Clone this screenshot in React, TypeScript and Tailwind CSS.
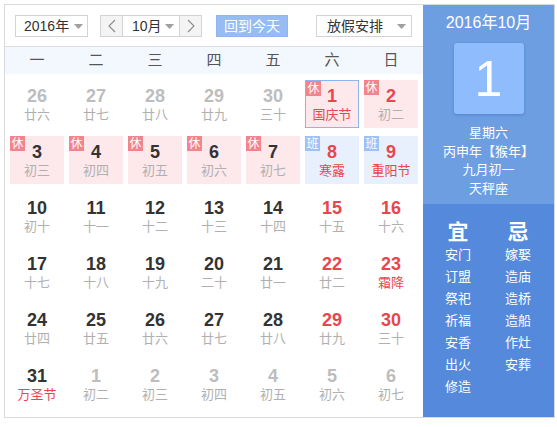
import React from "react";

type Day = {
  d: number;
  sub: string;
  other?: boolean;
  red?: boolean;
  fest?: boolean;
  tag?: "休" | "班";
  selected?: boolean;
};

const days: Day[] = [
  { d: 26, sub: "廿六", other: true },
  { d: 27, sub: "廿七", other: true },
  { d: 28, sub: "廿八", other: true },
  { d: 29, sub: "廿九", other: true },
  { d: 30, sub: "三十", other: true },
  { d: 1, sub: "国庆节", red: true, fest: true, tag: "休", selected: true },
  { d: 2, sub: "初二", red: true, tag: "休" },
  { d: 3, sub: "初三", tag: "休" },
  { d: 4, sub: "初四", tag: "休" },
  { d: 5, sub: "初五", tag: "休" },
  { d: 6, sub: "初六", tag: "休" },
  { d: 7, sub: "初七", tag: "休" },
  { d: 8, sub: "寒露", red: true, fest: true, tag: "班" },
  { d: 9, sub: "重阳节", red: true, fest: true, tag: "班" },
  { d: 10, sub: "初十" },
  { d: 11, sub: "十一" },
  { d: 12, sub: "十二" },
  { d: 13, sub: "十三" },
  { d: 14, sub: "十四" },
  { d: 15, sub: "十五", red: true },
  { d: 16, sub: "十六", red: true },
  { d: 17, sub: "十七" },
  { d: 18, sub: "十八" },
  { d: 19, sub: "十九" },
  { d: 20, sub: "二十" },
  { d: 21, sub: "廿一" },
  { d: 22, sub: "廿二", red: true },
  { d: 23, sub: "霜降", red: true, fest: true },
  { d: 24, sub: "廿四" },
  { d: 25, sub: "廿五" },
  { d: 26, sub: "廿六" },
  { d: 27, sub: "廿七" },
  { d: 28, sub: "廿八" },
  { d: 29, sub: "廿九", red: true },
  { d: 30, sub: "三十", red: true },
  { d: 31, sub: "万圣节", fest: true },
  { d: 1, sub: "初二", other: true },
  { d: 2, sub: "初三", other: true },
  { d: 3, sub: "初四", other: true },
  { d: 4, sub: "初五", other: true },
  { d: 5, sub: "初六", other: true },
  { d: 6, sub: "初七", other: true },
];

const weekdays = ["一", "二", "三", "四", "五", "六", "日"];
const yi = ["安门", "订盟", "祭祀", "祈福", "安香", "出火", "修造"];
const ji = ["嫁娶", "造庙", "造桥", "造船", "作灶", "安葬"];

function Caret() {
  return (
    <svg width="9" height="5" viewBox="0 0 9 5" className="shrink-0">
      <path d="M0 0h9L4.5 5z" fill="#a0a0a0" />
    </svg>
  );
}

function Chevron({ left }: { left?: boolean }) {
  return (
    <svg width="8" height="14" viewBox="0 0 8 14">
      <path
        d={left ? "M7 1L1 7l6 6" : "M1 1l6 6-6 6"}
        fill="none"
        stroke="#8a8a8a"
        strokeWidth="1.1"
      />
    </svg>
  );
}

function Cell({ day }: { day: Day }) {
  let bg = "";
  if (day.tag === "休") bg = "bg-[#fde8ec]";
  if (day.tag === "班") bg = "bg-[#e8f0fe]";
  const border = day.selected ? "border border-[#8db4ef]" : "";
  const numColor = day.other ? "text-[#bdbdbd]" : day.red ? "text-[#e8464e]" : "text-[#333]";
  const subColor = day.fest ? "text-[#e8464e]" : "text-[#b0b0b0]";
  return (
    <div className={`relative h-[48px] flex flex-col items-center ${bg} ${border} ${day.selected ? "pt-[6px]" : "pt-[7px]"}`}>
      {day.tag && (
        <span
          className={`absolute top-0 left-0 w-[15px] h-[15px] flex items-center justify-center text-[12px] leading-none text-white ${
            day.tag === "休" ? "bg-[#f3848e]" : "bg-[#9fc2f6]"
          }`}
        >
          {day.tag}
        </span>
      )}
      <span className={`text-[18px] leading-[18px] font-bold ${numColor}`}>{day.d}</span>
      <span className={`mt-[2px] text-[13px] leading-[16px] ${subColor}`}>{day.sub}</span>
    </div>
  );
}

export default function App() {
  return (
    <div
      className="pt-[4px] pl-[4px] bg-white"
      style={{ fontFamily: '"Liberation Sans", Arial, "Noto Sans CJK SC", sans-serif' }}
    >
      <div className="w-[551px] h-[414px] border border-[#dadada] flex">
        {/* Left: calendar */}
        <div className="w-[418px] flex flex-col">
          <div className="h-[42px] border-b border-[#dcdcdc] flex items-start pt-[10px] pl-[10px]">
            <div className="w-[73px] h-[22px] border border-[#d3d3d3] flex items-center justify-between pl-[8px] pr-[4px] text-[14px] text-[#333]">
              <span>2016年</span>
              <Caret />
            </div>
            <div className="ml-[12px] h-[22px] w-[102px] border border-[#d3d3d3] flex">
              <div className="w-[22px] flex items-center justify-center bg-[#f4f4f4] border-r border-[#d3d3d3]">
                <Chevron left />
              </div>
              <div className="flex-1 flex items-center justify-between pl-[9px] pr-[5px] text-[14px] text-[#333]">
                <span>10月</span>
                <Caret />
              </div>
              <div className="w-[22px] flex items-center justify-center bg-[#f4f4f4] border-l border-[#d3d3d3]">
                <Chevron />
              </div>
            </div>
            <div className="ml-[14px] w-[72px] h-[22px] bg-[#97bcf4] border border-[#8fb5f0] flex items-center justify-center text-[14px] text-white">
              回到今天
            </div>
            <div className="ml-[28px] w-[96px] h-[22px] border border-[#d3d3d3] flex items-center justify-between pl-[10px] pr-[5px] text-[14px] text-[#333]">
              <span>放假安排</span>
              <Caret />
            </div>
          </div>

          <div className="h-[27px] bg-[#f3f7fe] grid grid-cols-[repeat(7,54px)] gap-x-[5px] px-[5px]">
            {weekdays.map((w) => (
              <div key={w} className="flex items-center justify-center text-[15px] text-[#555]">
                {w}
              </div>
            ))}
          </div>

          <div className="grid grid-cols-[repeat(7,54px)] gap-x-[5px] gap-y-[8px] px-[5px] pt-[6px]">
            {days.map((day, i) => (
              <Cell key={i} day={day} />
            ))}
          </div>
        </div>

        {/* Right: today detail */}
        <div className="flex-1 flex flex-col text-white">
          <div className="h-[199px] bg-[#6d9ee2] flex flex-col items-center pt-[8px]">
            <div className="text-[16px] leading-[20px]">2016年10月</div>
            <div className="mt-[10px] w-[70px] h-[71px] rounded-[3px] bg-[#8fbcfd] shadow-[0_1px_3px_rgba(40,80,150,0.35)] flex items-center justify-center text-[50px] leading-none font-normal">
              1
            </div>
            <div className="mt-[10px] flex flex-col items-center text-[13px] leading-[18.5px]">
              <span>星期六</span>
              <span>丙申年【猴年】</span>
              <span>九月初一</span>
              <span>天秤座</span>
            </div>
          </div>
          <div className="flex-1 bg-[#5589dc] flex gap-[10px] pl-[10px] pt-[16px]">
            <div className="w-[50px] flex flex-col items-center">
              <span className="text-[21px] leading-[24px] font-bold">宜</span>
              {yi.map((t) => (
                <span key={t} className="text-[13px] leading-[22px]">{t}</span>
              ))}
            </div>
            <div className="w-[50px] flex flex-col items-center">
              <span className="text-[21px] leading-[24px] font-bold">忌</span>
              {ji.map((t) => (
                <span key={t} className="text-[13px] leading-[22px]">{t}</span>
              ))}
            </div>
          </div>
        </div>
      </div>
    </div>
  );
}
